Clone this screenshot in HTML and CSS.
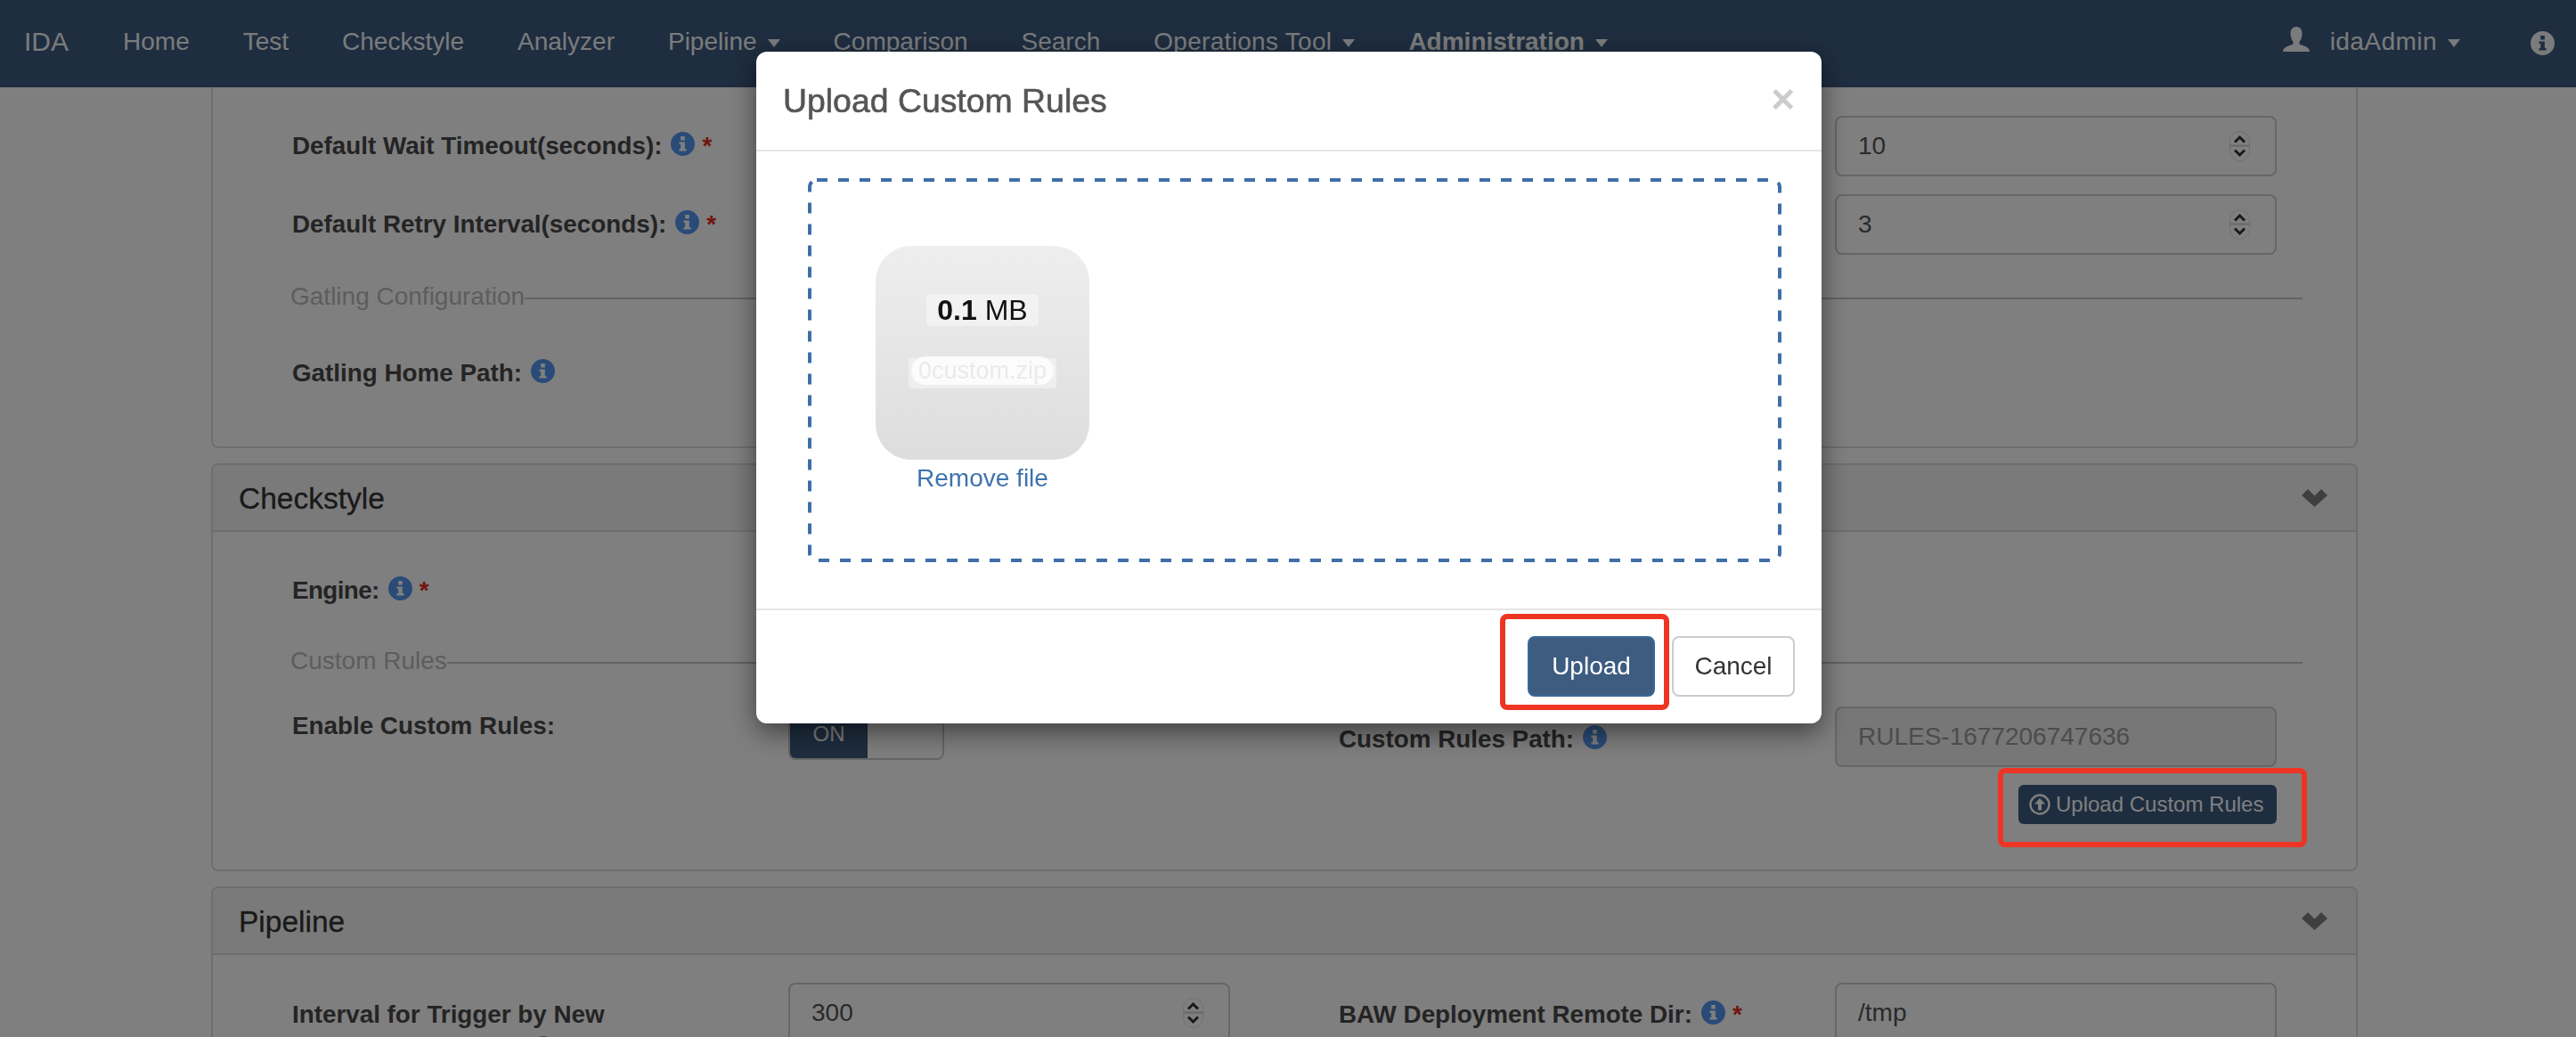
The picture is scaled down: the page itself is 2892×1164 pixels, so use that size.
FILE: index.html

```html
<!DOCTYPE html>
<html lang="en">
<head>
  <meta charset="UTF-8" />
  <title>IDA Administration</title>
  <link rel="stylesheet" href="styles.css">
</head>
<body>
  <svg class="defs" width="0" height="0">
    <symbol id="info" viewBox="0 0 27 27">
      <path fill-rule="evenodd" d="M13.500 0A13.500 13.500 0 1 1 13.500 27 13.500 13.500 0 1 1 13.500 0ZM11.200 5V9.500H15.800V5ZM9.500 11.500V14H11.200V19H9.500V21.500H17.500V19H15.800V11.500Z"/>
    </symbol>
    <symbol id="chevron" viewBox="0 0 29 20">
      <path d="M0 7 7 0 14.500 7.500 22 0 29 7 14.500 20Z"/>
    </symbol>
    <symbol id="spin" viewBox="0 0 23 34">
      <rect x="0.500" y="0.500" width="22" height="33" rx="11" fill="none" stroke="#e2e2e2"/>
      <path d="M0 16.500H23" stroke="#d0d0d0" stroke-width="2"/>
      <path d="M6 12.500 11.500 7 17 12.500M6 21.500 11.500 27 17 21.500" fill="none" stroke="#333" stroke-width="3"/>
    </symbol>
  </svg>

  <nav class="navbar">
    <a class="brand">IDA</a>
    <a class="nav-link">Home</a>
    <a class="nav-link">Test</a>
    <a class="nav-link">Checkstyle</a>
    <a class="nav-link">Analyzer</a>
    <a class="nav-link">Pipeline<i class="caret"></i></a>
    <a class="nav-link">Comparison</a>
    <a class="nav-link">Search</a>
    <a class="nav-link nav-wide">Operations Tool<i class="caret"></i></a>
    <a class="nav-link active">Administration<i class="caret"></i></a>
    <div class="nav-right">
      <svg class="user-icon" viewBox="0 0 30 28"><path d="M15 0C20 0 21.500 4 21.500 8 21.500 12 20 15 18.500 17V19.500C22 21.500 30 22 30 28H0C0 22 8 21.500 11.500 19.500V17C10 15 8.500 12 8.500 8 8.500 4 10 0 15 0Z"/></svg>
      <a class="nav-user">idaAdmin<i class="caret"></i></a>
      <svg class="nav-info"><use href="#info"/></svg>
    </div>
  </nav>

  <main class="content">
    <section class="panel panel-top">
      <div class="panel-body body-general">
        <div class="row">
          <label>Default Wait Timeout(seconds):<svg class="info"><use href="#info"/></svg><b class="req">*</b></label>
          <span></span><span></span><span></span>
          <div class="field"><span>10</span><svg class="spin"><use href="#spin"/></svg></div>
        </div>
        <div class="row row-next">
          <label>Default Retry Interval(seconds):<svg class="info"><use href="#info"/></svg><b class="req">*</b></label>
          <span></span><span></span><span></span>
          <div class="field"><span>3</span><svg class="spin"><use href="#spin"/></svg></div>
        </div>
        <div class="legend legend-gatling"><span>Gatling Configuration</span></div>
        <div class="row row-gatling">
          <label>Gatling Home Path:<svg class="info"><use href="#info"/></svg></label>
        </div>
      </div>
    </section>

    <section class="panel">
      <header class="panel-heading">Checkstyle<svg class="chevron"><use href="#chevron"/></svg></header>
      <div class="panel-body body-checkstyle">
        <div class="row">
          <label class="label-engine">Engine:<svg class="info"><use href="#info"/></svg><b class="req">*</b></label>
        </div>
        <div class="legend legend-rules"><span>Custom Rules</span></div>
        <div class="row row-rules">
          <label class="label-enable">Enable Custom Rules:</label>
          <div class="toggle"><span class="toggle-on">ON</span></div>
          <span></span>
          <label class="label-path">Custom Rules Path:<svg class="info"><use href="#info"/></svg></label>
          <div class="field field-disabled"><span>RULES-1677206747636</span></div>
        </div>
        <div class="actions">
          <button class="btn-small" type="button">
            <svg class="up-icon" viewBox="0 0 24 24"><circle cx="12" cy="12" r="10.500" fill="none" stroke="currentColor" stroke-width="2.400"/><path d="M12 5 18 11.500H14V18.500H10V11.500H6Z" fill="currentColor"/></svg>Upload Custom Rules
          </button>
        </div>
      </div>
    </section>

    <section class="panel">
      <header class="panel-heading">Pipeline<svg class="chevron"><use href="#chevron"/></svg></header>
      <div class="panel-body body-pipeline">
        <div class="row row-pipeline">
          <label class="label-top">Interval for Trigger by New Commits(seconds):<svg class="info"><use href="#info"/></svg></label>
          <div class="field"><span>300</span><svg class="spin"><use href="#spin"/></svg></div>
          <span></span>
          <label class="label-top">BAW Deployment Remote Dir:<svg class="info"><use href="#info"/></svg><b class="req">*</b></label>
          <div class="field"><span>/tmp</span></div>
        </div>
      </div>
    </section>
  </main>

  <div class="backdrop">
    <div class="modal">
      <header class="modal-header">
        <h4>Upload Custom Rules</h4>
        <span class="close">×</span>
      </header>
      <div class="modal-body">
        <div class="dropzone">
          <svg class="dz-border" width="1093" height="431"><rect x="2" y="2" width="1089" height="427" rx="8"/></svg>
          <div class="dz-preview">
            <div class="dz-image">
              <div class="dz-size"><strong>0.1</strong> MB</div>
              <div class="dz-filename"><span>0custom.zip</span></div>
            </div>
            <a class="dz-remove">Remove file</a>
          </div>
        </div>
      </div>
      <footer class="modal-footer">
        <button class="btn btn-primary" type="button">Upload</button>
        <button class="btn btn-default" type="button">Cancel</button>
      </footer>
    </div>
    <div class="mark mark-upload"></div>
    <div class="mark mark-rules"></div>
  </div>
</body>
</html>
```

FILE: styles.css

```css
* { box-sizing: border-box; }
html, body { margin: 0; height: 1164px; overflow: hidden; }
body { background: #fff; color: #444; font-family: "Liberation Sans", Arial, sans-serif; font-size: 28px; line-height: 40px; }
.defs { position: absolute; }

/* navbar */
.navbar { display: flex; height: 98px; background: #3c5a7e; color: #f4f6f8; line-height: 94px; padding-left: 27px; }
.brand { font-size: 30px; margin-right: 61px; }
.nav-link { margin-right: 60px; white-space: nowrap; }
.nav-wide { letter-spacing: .3px; }
.nav-link.active { font-weight: bold; }
.caret { display: inline-block; margin-left: 12px; vertical-align: middle; border-top: 9px solid currentColor; border-left: 7.500px solid transparent; border-right: 7.500px solid transparent; }
.nav-right { display: flex; align-items: flex-start; margin-left: auto; }
.user-icon { width: 30px; height: 28px; margin: 30px 23px 0 0; fill: currentColor; }
.nav-user { margin-right: 79px; letter-spacing: .45px; }
.nav-info { width: 27px; height: 27px; margin: 35px 24px 0 0; fill: currentColor; }

/* panels */
.content { margin-left: 237px; width: 2410px; }
.panel { border: 2px solid #ddd; border-radius: 8px; margin-bottom: 17px; }
.panel-top { border-top: 0; border-radius: 0 0 8px 8px; height: 405px; }
.panel-heading { display: flex; justify-content: space-between; align-items: center; height: 75px; padding: 2px 32px 0 29px; background: #f5f5f5; border-bottom: 2px solid #ddd; border-radius: 6px 6px 0 0; color: #333; font-size: 33.500px; -webkit-text-stroke: .3px #333; }
.chevron { width: 29px; height: 20px; fill: #7f7f7f; margin-top: -2px; }
.panel-body { padding: 32px 60px 0 89px; }
.body-checkstyle { height: 379px; }
.body-pipeline { height: 200px; padding-top: 31px; }

.row { display: grid; grid-template-columns: 557px 496px 122px 557px 496px; align-items: center; min-height: 68px; }
.row-next { margin-top: 20px; }
.row-gatling { margin-top: 32px; }
.row-rules { margin-top: 31px; align-items: start; }
.row-pipeline { align-items: start; }
.row label { font-size: 27.800px; font-weight: bold; color: #484848; white-space: nowrap; }
.row .label-top { white-space: normal; padding: 16px 60px 0 0; }
.row .label-enable { padding-top: 2px; }
.row .label-path { margin-top: 17px; }
.row .label-engine { letter-spacing: -.6px; }
.info { width: 27px; height: 27px; margin-left: 10px; vertical-align: -2px; fill: #5497f0; }
.req { margin-left: 8px; color: #e62a1c; }

.field { display: flex; justify-content: space-between; align-items: center; height: 68px; padding: 0 28px 0 24px; border: 2px solid #ccc; border-radius: 8px; color: #555; }
.field-disabled { background: #eee; color: #999; }
.spin { width: 23px; height: 34px; }

.legend { display: flex; align-items: center; height: 40px; margin-left: -2px; color: #bbb; }
.legend::after { content: ""; flex: 1; height: 2px; margin-top: 4px; background: #c4c4c4; }
.legend-gatling { margin-top: 27px; }
.legend-rules { margin-top: 25px; }

.toggle { width: 175px; height: 60px; border: 2px solid #ccc; border-radius: 8px; overflow: hidden; }
.toggle-on { display: block; width: 87px; height: 100%; background: #3c5a7e; color: #fff; font-size: 24px; line-height: 58px; text-align: center; }

.actions { display: flex; justify-content: flex-end; width: 2228px; margin-top: 20px; }
.btn-small { display: flex; align-items: center; gap: 6px; width: 290px; height: 44px; padding: 0 0 0 12px; border: 0; border-radius: 6px; background: #3c5a7e; color: #fff; font: 24px "Liberation Sans", Arial, sans-serif; white-space: nowrap; }
.up-icon { width: 24px; height: 24px; flex: none; }

/* modal */
.backdrop { position: fixed; top: 0; left: 0; right: 0; bottom: 0; display: flex; justify-content: center; align-items: flex-start; padding: 58px 0 0 2px; background: rgba(0, 0, 0, .5); }
.modal { width: 1196px; height: 754px; background: #fff; border-radius: 12px; box-shadow: 0 10px 30px rgba(0, 0, 0, .5); }
.modal-header { display: flex; justify-content: space-between; height: 112px; padding: 0 30px; border-bottom: 2px solid #e5e5e5; }
.modal-header h4 { margin: 0; font-size: 37.400px; font-weight: normal; line-height: 110px; color: #555; -webkit-text-stroke: .6px #555; }
.close { font-size: 46px; font-weight: bold; line-height: 106px; color: #ccc; }
.modal-body { height: 513px; padding: 30px 45px 0 58px; }
.dropzone { position: relative; height: 431px; padding: 76px; }
.dz-border { position: absolute; top: 0; left: 0; }
.dz-border rect { fill: none; stroke: #3f6ea8; stroke-width: 4; stroke-dasharray: 12 12; }
.dz-preview { width: 240px; text-align: center; }
.dz-image { display: flex; flex-direction: column; align-items: center; height: 240px; padding-top: 54px; background: linear-gradient(#eee, #ddd); border-radius: 40px; }
.dz-size { height: 36px; padding: 0 12px; background: rgba(255, 255, 255, .4); border-radius: 4px; color: #111; font-size: 32px; line-height: 36px; }
.dz-filename { display: flex; justify-content: center; width: 166px; height: 34px; margin-top: 36px; background: rgba(255, 255, 255, .4); border-radius: 4px; color: #eaeaea; font-size: 27px; }
.dz-filename span { width: 160px; height: 32px; margin-top: -2px; background: rgba(255, 255, 255, .8); border-radius: 16px; line-height: 32px; }
.dz-remove { display: block; margin-top: 1px; color: #3f73ad; }
.modal-footer { display: flex; justify-content: flex-end; gap: 19px; height: 129px; padding: 29px 30px 0 0; border-top: 2px solid #e5e5e5; }
.btn { height: 68px; border-radius: 8px; font: 28px "Liberation Sans", Arial, sans-serif; }
.btn-primary { width: 143px; background: #3d5c80; border: 2px solid #3a689c; color: #fff; }
.btn-default { width: 138px; background: #fff; border: 2px solid #ccc; color: #333; }

/* red call-outs drawn over the screenshot */
.mark { position: absolute; border: 6px solid #ee3524; border-radius: 8px; }
.mark-upload { left: 1684px; top: 689px; width: 190px; height: 108px; }
.mark-rules { left: 2243px; top: 862px; width: 347px; height: 89px; }
```
